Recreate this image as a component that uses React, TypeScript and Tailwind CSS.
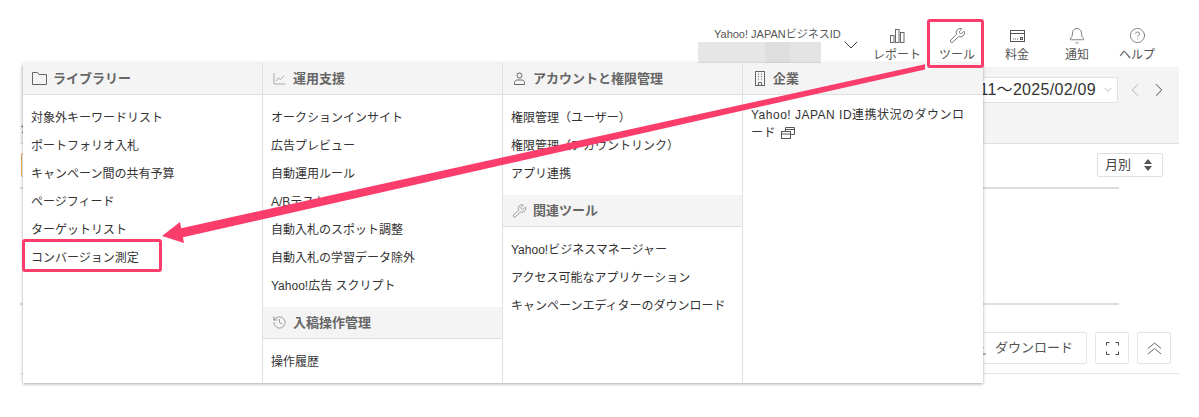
import { Bell, ChevronDown, ChevronLeft, ChevronRight, CircleHelp, History, Wrench } from 'lucide-react';
import type { ReactNode } from 'react';

const fontStack = '[font-family:"Liberation_Sans","Noto_Sans_CJK_JP",sans-serif]';

function BarsIcon() {
  return (
    <svg width="15" height="14" viewBox="0 0 15 14" fill="none" stroke="#666" strokeWidth="1">
      <rect x="0.5" y="6.5" width="3.5" height="7" />
      <rect x="5.5" y="0.5" width="3.5" height="13" />
      <rect x="10.5" y="3.5" width="3.5" height="10" />
    </svg>
  );
}

function CardIcon() {
  return (
    <svg width="15" height="12" viewBox="0 0 15 12" fill="none" stroke="#555" strokeWidth="1">
      <rect x="0.5" y="0.5" width="14" height="11" />
      <path d="M0.5 3.5h14" />
      <path d="M3 9h5" strokeDasharray="1 1" />
      <rect x="10.5" y="7.5" width="2" height="2" />
    </svg>
  );
}

function FolderIcon() {
  return (
    <svg width="15" height="13" viewBox="0 0 15 13" fill="none" stroke="#666" strokeWidth="1">
      <path d="M0.5 12.5V0.5h5l1.5 2h7.5v10z" />
    </svg>
  );
}

function ChartIcon() {
  return (
    <svg width="13" height="13" viewBox="0 0 13 13" fill="none" stroke="#aaa" strokeWidth="1">
      <path d="M1 1v11h11.5" />
      <path d="M3 9l2.5-3 2 1.5L11 3.5" />
    </svg>
  );
}

function UserIcon() {
  return (
    <svg width="13" height="13" viewBox="0 0 13 13" fill="none" stroke="#666" strokeWidth="1">
      <circle cx="6.5" cy="3.5" r="2.5" />
      <path d="M1.5 12.5v-2c0-1.5 1.5-2.5 3-2.5h4c1.5 0 3 1 3 2.5v2z" />
    </svg>
  );
}

function BuildingIcon() {
  return (
    <svg width="14" height="15" viewBox="0 0 14 15" fill="none" stroke="#666" strokeWidth="1">
      <rect x="2.5" y="0.5" width="9" height="14" />
      <path d="M5 3h1M8 3h1M5 5.5h1M8 5.5h1M5 8h1M8 8h1" />
      <path d="M5.5 14.5v-3h3v3" />
    </svg>
  );
}

function WindowIcon() {
  return (
    <svg width="14" height="12" viewBox="0 0 14 12" fill="none" stroke="#555" strokeWidth="1" className="ml-[5px] inline-block align-[-2px]">
      <path d="M4.5 4V0.5h9v7H10" />
      <path d="M4.5 2.5h9" />
      <rect x="0.5" y="4.5" width="9" height="7" />
      <path d="M0.5 7h9" />
    </svg>
  );
}

function FullscreenIcon() {
  return (
    <svg width="13" height="13" viewBox="0 0 13 13" fill="none" stroke="#444" strokeWidth="1">
      <path d="M.5 3.5v-3h3M9.5 .5h3v3M12.5 9.5v3h-3M3.5 12.5h-3v-3" />
    </svg>
  );
}

function DoubleUpIcon() {
  return (
    <svg width="15" height="13" viewBox="0 0 15 13" fill="none" stroke="#666" strokeWidth="1">
      <path d="M1 6.5L7.5 1L14 6.5" />
      <path d="M1 12L7.5 6.5L14 12" />
    </svg>
  );
}

function DownloadIcon() {
  return (
    <svg width="13" height="14" viewBox="0 0 13 14" fill="none" stroke="#666" strokeWidth="1">
      <path d="M6.5 1v8M3.5 6.5l3 3 3-3M1 13h11" />
    </svg>
  );
}

function NavItem({ icon, label }: { icon: ReactNode; label: string }) {
  return (
    <div className="flex w-[60px] flex-col items-center">
      <div className="flex h-[17px] items-center justify-center">{icon}</div>
      <span className="mt-[3px] text-[12px] leading-[16px] text-[#555]">{label}</span>
    </div>
  );
}

function SectionHead({ icon, title }: { icon: ReactNode; title: string }) {
  return (
    <div className="flex h-[32px] items-center gap-[6px] border-b border-[#e0e0e0] bg-[#f4f4f4] pl-[9px]">
      <span className="flex w-[15px] justify-center">{icon}</span>
      <span className="text-[13px] font-bold text-[#666]">{title}</span>
    </div>
  );
}

function LinkList({ items }: { items: string[] }) {
  return (
    <ul className="pb-[7px] pt-[9px]">
      {items.map((item) => (
        <li key={item} className="flex h-[28px] items-center pl-[8px] text-[12px] text-[#333]">
          {item}
        </li>
      ))}
    </ul>
  );
}

export default function App() {
  return (
    <div className={`relative h-[417px] w-[1199px] overflow-hidden bg-white ${fontStack}`}>
      {/* page behind the menu */}
      <header className="flex h-[67px] items-start justify-end pr-[32px] pt-[28px]">
        <div className="mr-[4px] flex items-start">
          <div className="w-[123px]">
            <div className="whitespace-nowrap pl-[16px] text-[11px] leading-[13px] text-[#555]">Yahoo! JAPANビジネスID</div>
            <div className="mt-[1px] flex h-[23px] w-[123px]">
              <div className="w-[67px] bg-[#e6e6e6]" />
              <div className="w-[25px] bg-[#dedede]" />
              <div className="w-[31px] bg-[#e4e4e4]" />
            </div>
          </div>
          <ChevronDown size={24} strokeWidth={1} color="#444" className="ml-[18px] mt-[5px]" />
        </div>
        <div className="-mt-[1px] flex">
          <NavItem icon={<BarsIcon />} label="レポート" />
          <NavItem icon={<Wrench size={17} strokeWidth={1.1} color="#555" />} label="ツール" />
          <NavItem icon={<CardIcon />} label="料金" />
          <NavItem icon={<Bell size={18} strokeWidth={1} color="#555" />} label="通知" />
          <NavItem icon={<CircleHelp size={17} strokeWidth={1} color="#555" />} label="ヘルプ" />
        </div>
      </header>

      <section className="ml-[20px] flex h-[77px] w-[1159px] items-start justify-between border-b border-[#e0e0e0] bg-[#f4f4f4] pr-[9px] pt-[10px]">
        <span className="mt-[41px] text-[13px] text-[#555]">ジ</span>
        <div className="flex">
          <div className="flex h-[26px] w-[300px] items-center justify-end rounded-[2px] border border-[#e0e0e0] bg-white pr-[3px] text-[16px] tracking-[0.3px] text-[#333]">
            <span className="whitespace-nowrap">2025/01/11〜2025/02/09</span>
            <ChevronDown size={12} strokeWidth={1} color="#777" className="ml-[6px]" />
          </div>
          <div className="ml-[6px] flex h-[26px] items-center gap-[2px]">
            <ChevronLeft size={22} strokeWidth={1} color="#aaa" />
            <ChevronRight size={22} strokeWidth={1} color="#444" />
          </div>
        </div>
      </section>

      <div className="flex justify-between pl-[21px] pr-[36px] pt-[9px]">
        <div className="h-[24px] w-[100px] rounded-[2px] border border-[#eda75a]" />
        <div className="flex h-[24px] w-[66px] items-center justify-between rounded-[2px] border border-[#e0e0e0] pl-[7px] pr-[10px] text-[13px] text-[#444]">
          月別
          <span className="flex flex-col gap-[2px]">
            <span className="h-0 w-0 border-x-[4px] border-b-[5px] border-x-transparent border-b-[#555]" />
            <span className="h-0 w-0 border-x-[4px] border-t-[5px] border-x-transparent border-t-[#555]" />
          </span>
        </div>
      </div>

      <div className="ml-[20px] mt-[10px] h-[2px] w-[1099px] bg-[#ddd]" />
      <div className="ml-[20px] mt-[114px] h-[2px] w-[1099px] bg-[#ddd]" />

      <div className="flex justify-end gap-[8px] pr-[28px] pt-[27px]">
        <div className="flex h-[32px] w-[120px] items-center justify-end gap-[8px] rounded-[2px] border border-[#e4e4e4] pr-[13px] text-[13px] text-[#555]">
          <DownloadIcon />
          ダウンロード
        </div>
        <div className="flex h-[32px] w-[34px] items-center justify-center rounded-[2px] border border-[#e4e4e4]">
          <FullscreenIcon />
        </div>
        <div className="flex h-[32px] w-[34px] items-center justify-center rounded-[2px] border border-[#e4e4e4]">
          <DoubleUpIcon />
        </div>
      </div>
      <div className="ml-[20px] mt-[9px] h-px w-[1159px] bg-[#e4e4e4]" />

      {/* dropdown panel */}
      <div className="absolute left-[23px] top-[63px] grid h-[320px] w-[960px] grid-cols-4 bg-white shadow-[0_1px_3px_rgba(0,0,0,0.35)]">
        <div className="border-r border-[#e0e0e0]">
          <SectionHead icon={<FolderIcon />} title="ライブラリー" />
          <LinkList items={['対象外キーワードリスト', 'ポートフォリオ入札', 'キャンペーン間の共有予算', 'ページフィード', 'ターゲットリスト', 'コンバージョン測定']} />
        </div>
        <div className="border-r border-[#e0e0e0]">
          <SectionHead icon={<ChartIcon />} title="運用支援" />
          <LinkList items={['オークションインサイト', '広告プレビュー', '自動運用ルール', 'A/Bテスト', '自動入札のスポット調整', '自動入札の学習データ除外', 'Yahoo!広告 スクリプト']} />
          <SectionHead icon={<History size={15} strokeWidth={1} color="#666" />} title="入稿操作管理" />
          <LinkList items={['操作履歴']} />
        </div>
        <div className="border-r border-[#e0e0e0]">
          <SectionHead icon={<UserIcon />} title="アカウントと権限管理" />
          <LinkList items={['権限管理（ユーザー）', '権限管理（アカウントリンク）', 'アプリ連携']} />
          <SectionHead icon={<Wrench size={16} strokeWidth={1} color="#666" />} title="関連ツール" />
          <LinkList items={['Yahoo!ビジネスマネージャー', 'アクセス可能なアプリケーション', 'キャンペーンエディターのダウンロード']} />
        </div>
        <div>
          <SectionHead icon={<BuildingIcon />} title="企業" />
          <p className="px-[8px] pt-[11px] text-[12px] leading-[18px] tracking-[0.5px] text-[#333]">
            Yahoo! JAPAN ID連携状況のダウンロ
            <br />
            ード
            <WindowIcon />
          </p>
        </div>
      </div>

      {/* annotation */}
      <div className="absolute left-[927px] top-[19px] h-[49px] w-[57px] rounded-[3px] border-[3px] border-[#fb3d6c]" />
      <div className="absolute left-[22px] top-[239px] h-[33px] w-[140px] rounded-[3px] border-[3px] border-[#fb3d6c]" />
      <svg className="absolute left-0 top-0" width="1199" height="417" viewBox="0 0 1199 417" fill="none">
        <path d="M925 64.2L925 69.4L182 237.5L180 228.5Z" fill="#fb3d6c" />
        <path d="M162 236L180 222L184 243Z" fill="#fb3d6c" />
      </svg>
    </div>
  );
}
